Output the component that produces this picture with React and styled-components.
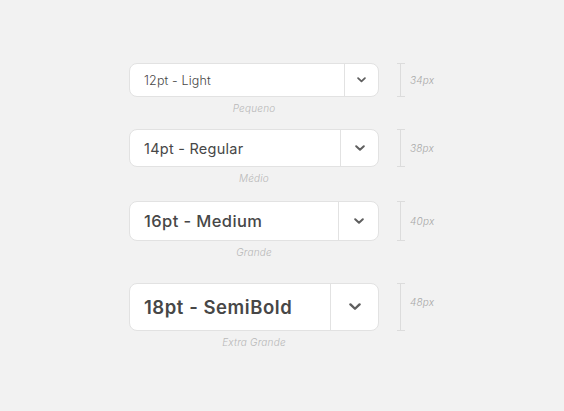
import React from 'react'
import styled, { createGlobalStyle } from 'styled-components'

const GlobalStyle = createGlobalStyle`
    html, body {
        margin: 0;
        padding: 0;
        background: #f2f2f2;
    }
    body {
        font-family: "Inter", "Liberation Sans", sans-serif;
    }
`

const sizes = [
    { value: '12pt - Light', label: 'Pequeno', height: 34, font: 12.5, weight: 300, track: 0.15, chevron: 9, space: 15, tag: 17 },
    { value: '14pt - Regular', label: 'Médio', height: 38, font: 14.5, weight: 400, track: 0.25, chevron: 10, space: 17, tag: 19 },
    { value: '16pt - Medium', label: 'Grande', height: 40, font: 16.5, weight: 500, track: 0.4, chevron: 10, space: 25, tag: 20 },
    { value: '18pt - SemiBold', label: 'Extra Grande', height: 48, font: 18.5, weight: 600, track: 0.55, chevron: 12, space: 0, tag: 19 },
]

const Page = styled.div`
    width: 564px;
    height: 411px;
    padding: 63px 0 0 129px;
    box-sizing: border-box;
`

const Row = styled.div`
    display: flex;
    align-items: flex-start;
    margin-bottom: ${p => p.$space}px;
`

const Field = styled.div`
    width: 250px;
    display: flex;
    flex-direction: column;
    align-items: center;
`

const SelectBox = styled.div`
    width: 100%;
    height: ${p => p.$height}px;
    box-sizing: border-box;
    display: flex;
    background: #fff;
    border: 1px solid #e2e2e2;
    border-radius: 8px;
`

const SelectValue = styled.div`
    flex: 1;
    display: flex;
    align-items: center;
    padding-left: 14px;
    font-size: ${p => p.$font}px;
    font-weight: ${p => p.$weight};
    letter-spacing: ${p => p.$track}px;
    color: #474747;
    white-space: nowrap;
`

const ChevronButton = styled.div`
    width: ${p => p.$height - 1}px;
    display: flex;
    align-items: center;
    justify-content: center;
    border-left: 1px solid #e2e2e2;
    color: #5f5f5f;
`

const Caption = styled.div`
    margin-top: 5px;
    height: 12px;
    line-height: 12px;
    font-size: 10px;
    font-style: italic;
    font-weight: 300;
    letter-spacing: 0.2px;
    color: #b8b8b8;
`

const Measure = styled.div`
    height: ${p => p.$height}px;
    width: 8px;
    margin-left: 18px;
    position: relative;
    box-sizing: border-box;
    border-top: 1px solid #dcdcdc;
    border-bottom: 1px solid #dcdcdc;

    &::before {
        content: '';
        position: absolute;
        left: 3px;
        top: 0;
        bottom: 0;
        width: 1px;
        background: #dcdcdc;
    }
`

const MeasureLabel = styled.div`
    margin-left: 5px;
    padding-top: ${p => p.$top - 6}px;
    font-size: 10px;
    font-style: italic;
    font-weight: 300;
    letter-spacing: 0.2px;
    color: #a8a8a8;
`

const Chevron = ({ size }) => (
    <svg width={size} height={size * 0.6} viewBox="0 0 10 6" fill="none">
        <path d="M1.2 1.2 L5 4.8 L8.8 1.2" stroke="currentColor" strokeWidth="2" strokeLinecap="round" strokeLinejoin="round" />
    </svg>
)

const App = () => {
    return (
        <Page>
            <GlobalStyle />
            {sizes.map(s => (
                <Row key={s.value} $space={s.space}>
                    <Field>
                        <SelectBox $height={s.height}>
                            <SelectValue $font={s.font} $weight={s.weight} $track={s.track}>{s.value}</SelectValue>
                            <ChevronButton $height={s.height}>
                                <Chevron size={s.chevron} />
                            </ChevronButton>
                        </SelectBox>
                        <Caption>{s.label}</Caption>
                    </Field>
                    <Measure $height={s.height} />
                    <MeasureLabel $top={s.tag}>{s.height}px</MeasureLabel>
                </Row>
            ))}
        </Page>
    )
}

export default App
